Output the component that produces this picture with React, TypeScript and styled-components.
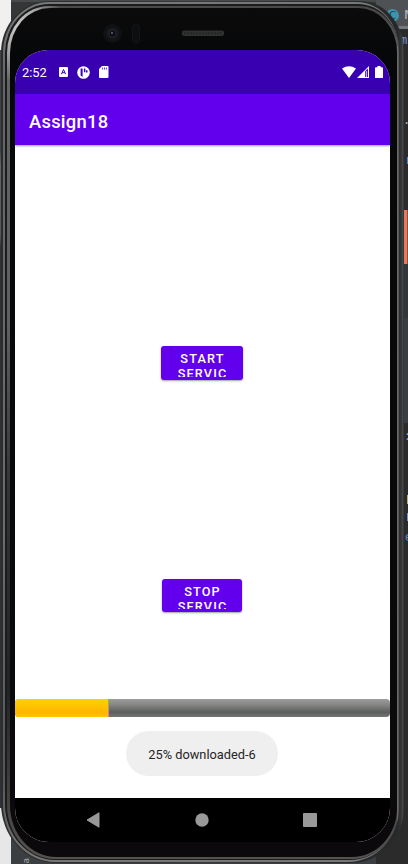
import React from "react";
import styled, { createGlobalStyle } from "styled-components";

const GlobalStyle = createGlobalStyle`
  * { box-sizing: border-box; }
  body { margin: 0; background: #2b2b2b; font-family: Roboto, sans-serif; overflow: hidden; }
`;

const Desktop = styled.div`
  position: relative;
  width: 408px;
  height: 864px;
  padding: 1px 4px 1px 1px;
  overflow: hidden;
  background: #2b2b2b;
`;

const Backdrop = styled.div`
  position: absolute;
  inset: 0;
  display: grid;
  grid-template-columns: 11px 1fr 32px;
`;

const LeftEdge = styled.div`
  background: linear-gradient(180deg, #f1f0ee 50px, #414345 50px, #414345 150px, #626466 166px, #55585a 235px, #303133 248px, #303133 808px, #e7e7e7 808px);
`;

const EditorMiddle = styled.div`
  display: flex;
  flex-direction: column;
  justify-content: flex-end;
  padding: 0 0 0 11px;
  background: linear-gradient(180deg, #484b4c 2px, #343638 2px, #343638 60px, #3b3f41 60px);
`;

const VerticalLabel = styled.span`
  writing-mode: vertical-rl;
  transform: rotate(180deg);
  align-self: flex-start;
  color: #a5a8a9;
  font: 9px/9px "DejaVu Sans", sans-serif;
`;

const RightEdge = styled.div`
  display: flex;
  flex-direction: column;
  align-items: flex-end;
  background: #2b2b2b;
`;

const EditorTab = styled.div`
  width: 32px;
  height: 29px;
  flex: none;
  display: flex;
  align-items: center;
  gap: 5px;
  padding: 4px 0 0 10px;
  border-bottom: 3px solid #747a80;
  background: #4e5254;
  color: #b9bbbd;
  font: 13px/14px "DejaVu Sans", sans-serif;
`;

const ClassBadge = styled.span`
  width: 13px;
  height: 13px;
  flex: none;
  border-radius: 50%;
  background: #3d94ae;
  color: #23414b;
  font: 10px/13px "DejaVu Sans", sans-serif;
  text-align: center;
`;

const CodeLine = styled.div<{ $h: number; $w: number; $c: string }>`
  width: ${(p) => p.$w}px;
  height: ${(p) => p.$h}px;
  flex: none;
  overflow: hidden;
  color: ${(p) => p.$c};
  font: 12px/14px "DejaVu Sans Mono", monospace;
  white-space: nowrap;
`;

const Mark = styled.div<{ $h: number; $w: number; $c?: string }>`
  width: ${(p) => p.$w}px;
  height: ${(p) => p.$h}px;
  flex: none;
  background: ${(p) => p.$c ?? "transparent"};
`;

const Shell = styled.div`
  position: relative;
  height: 862px;
  padding: 1px 5px 1px 2px;
  border-radius: 47px 44px 52px 54px / 52px 50px 56px 60px;
  background: linear-gradient(90deg, #2c2d2f 0, #38393b 50%, #26282a 396px, #323436 400px, #4a4c4e 402px, #242527 403px);
`;

const OuterRing = styled.div`
  height: 860px;
  padding: 2px 0 2px 2px;
  border-radius: 46px 42px 51px 52px / 51px 48px 55px 58px;
  background: linear-gradient(180deg, #777877 0, #646569 10%, #6b6c71 62%, #555657 90%, #777 100%);
`;

const Groove = styled.div`
  height: 856px;
  padding: 2px 0 1px 2px;
  border-radius: 44px 41px 49px 50px / 49px 47px 53px 56px;
  background: #1b1c1e;
`;

const InnerRing = styled.div`
  height: 853px;
  padding: 2px 2px 2px 3px;
  border-radius: 42px 40px 47px 48px / 47px 45px 51px 54px;
  background:
    linear-gradient(270deg, #595754 1px, #6b6865 1px, #6b6865 2px, transparent 2px) 0 40px / 100% 780px no-repeat,
    radial-gradient(ellipse 46px 56px at 10px 20px, #c6c6c4 0, #aaaaa8 45%, transparent 100%),
    linear-gradient(180deg, #4b4947 0, #4b4947 1%, #626463 8%, #5d605e 38%, #333635 56%, #222424 80%, #55534f 100%);
`;

const Bezel = styled.div`
  height: 849px;
  padding: 42px 6px 13px 5px;
  border-radius: 40px 39px 45px 46px / 45px 44px 49px 52px;
  background: linear-gradient(180deg, #0b0b0c 0, #060708 6%, #08090b 45%, #0b090b 100%);
`;

const CameraArea = styled.div`
  position: absolute;
  top: 19px;
  left: 98px;
  svg { display: block; }
`;

const Screen = styled.div`
  width: 375px;
  height: 792px;
  display: flex;
  flex-direction: column;
  overflow: hidden;
  border-radius: 33px 33px 34px 34px;
  background: #fff;
`;

const StatusBar = styled.div`
  height: 44px;
  flex: none;
  display: flex;
  align-items: center;
  padding: 0 7px;
  background: #3900b1;
  color: #fff;
`;

const Clock = styled.span`
  width: 36px;
  padding-top: 1px;
  font-size: 12.9px;
  line-height: 16px;
`;

const StatusIcon = styled.svg<{ $gap?: number }>`
  display: block;
  flex: none;
  margin-left: ${(p) => p.$gap ?? 0}px;
`;

const Spacer = styled.span`
  flex: 1;
`;

const AppBar = styled.header`
  position: relative;
  height: 51px;
  flex: none;
  display: flex;
  align-items: center;
  padding: 3px 14px 0;
  background: #6200ee;
  color: #fff;
  font-size: 18.4px;
  font-weight: 500;
  letter-spacing: 0.25px;
  box-shadow: 0 1px 2px rgba(0, 0, 0, 0.4);
`;

const Content = styled.main`
  height: 653px;
  flex: none;
  display: flex;
  flex-direction: column;
  justify-content: flex-end;
  align-items: center;
  padding-bottom: 22px;
`;

const Actions = styled.div`
  display: flex;
  flex-direction: column;
  align-items: center;
  gap: 199px;
  padding: 0 1px 87px 0;
`;

const ActionButton = styled.button<{ $w: number; $h: number }>`
  display: flex;
  flex-direction: column;
  align-items: center;
  justify-content: flex-start;
  flex: none;
  width: ${(p) => p.$w}px;
  height: ${(p) => p.$h}px;
  padding: 5px 0 3px 1px;
  border: 0;
  border-radius: 3px;
  background: #6200ee;
  box-shadow: 0 1px 2px rgba(0, 0, 0, 0.38);
  color: #fff;
`;

const ButtonLabel = styled.span`
  display: block;
  height: 100%;
  overflow: hidden;
  font: 500 12.7px/15px Roboto, sans-serif;
  letter-spacing: 1.15px;
  text-align: center;
`;

const ProgressTrack = styled.div`
  align-self: stretch;
  height: 18px;
  flex: none;
  overflow: hidden;
  border-radius: 4px;
  background: linear-gradient(180deg, #9b9c9b 0, #858685 32%, #5b5e5a 74%, #737673 100%);
`;

const ProgressFill = styled.div`
  height: 100%;
  border-right: 1px solid #b79d59;
  background: linear-gradient(180deg, #ffd000 0, #ffc500 35%, #ffb500 74%, #ffc500 100%);
`;

const Toast = styled.div`
  width: 152px;
  height: 45px;
  margin: 14px 1px 0 0;
  display: flex;
  align-items: center;
  justify-content: center;
  padding-top: 1px;
  border-radius: 23px;
  background: #efefef;
  color: #252525;
  font-size: 12.8px;
`;

const NavBar = styled.nav`
  height: 44px;
  flex: none;
  display: grid;
  grid-template-columns: 14px 14px 14px;
  column-gap: 94.5px;
  align-items: center;
  padding-left: 71px;
  background: #000;
  svg { display: block; }
`;

const EditorBackdrop = () => (
  <Backdrop>
    <LeftEdge />
    <EditorMiddle>
      <VerticalLabel>a</VerticalLabel>
    </EditorMiddle>
    <RightEdge>
      <EditorTab>
        <ClassBadge>C</ClassBadge>M
      </EditorTab>
      <Mark $w={0} $h={4} />
      <CodeLine $w={8} $h={80} $c="#719dd1">mp</CodeLine>
      <CodeLine $w={5} $h={40} $c="#a9b7c6">.r</CodeLine>
      <CodeLine $w={3} $h={57} $c="#759bc9">r</CodeLine>
      <Mark $w={4} $h={54} $c="linear-gradient(90deg,#ed745e 3px,#775b38 3px)" />
      <Mark $w={4} $h={54} $c="#333638" />
      <Mark $w={4} $h={105} $c="#3b3e40" />
      <Mark $w={0} $h={6} />
      <CodeLine $w={4} $h={66} $c="#8daccb">:</CodeLine>
      <Mark $w={1} $h={9} $c="#b8b773" />
      <Mark $w={0} $h={9} />
      <Mark $w={1} $h={8} $c="#758fd0" />
      <Mark $w={0} $h={9} />
      <CodeLine $w={3} $h={16} $c="#4f8cc3">e</CodeLine>
    </RightEdge>
  </Backdrop>
);

const CameraParts = () => (
  <CameraArea>
    <svg width="130" height="26" viewBox="0 0 130 26">
      <circle cx="13.5" cy="13.5" r="9.5" fill="#101113" />
      <circle cx="13.5" cy="13.5" r="6" fill="#191a1c" />
      <circle cx="13.5" cy="13.5" r="3.5" fill="#080b12" stroke="#24262b" />
      <circle cx="13" cy="13" r="1.2" fill="#4b5368" />
      <rect x="33.5" y="4" width="7" height="19" rx="3.5" fill="#0d0e0f" stroke="#141516" />
      <rect x="83" y="10.5" width="42" height="5.5" rx="2" fill="#303131" />
      <path d="M85 13.2h38" stroke="#262727" strokeWidth="2" strokeDasharray="2 1" />
    </svg>
  </CameraArea>
);

const LeftStatusIcons = () => (
  <>
    <StatusIcon $gap={1} width="9" height="10" viewBox="0 0 9 10">
      <rect width="9" height="10" rx="1" fill="#fff" />
      <path d="M2.4 7.2 4.5 2.5 6.6 7.2M3.1 5.7h2.8" stroke="#3900b1" strokeWidth="1" fill="none" />
    </StatusIcon>
    <StatusIcon $gap={9} width="13" height="13" viewBox="0 0 13 13">
      <circle cx="6.5" cy="6.5" r="6.3" fill="#fff" />
      <path d="M3.6 2.6h2v8.2A4.6 4.6 0 0 1 3.6 9.6z" fill="#3900b1" />
      <path d="M6.9 2.4h1.5v3.8H6.9zM9 4.2h1.5v2.2H9z" fill="#3900b1" />
    </StatusIcon>
    <StatusIcon $gap={9} width="10" height="12" viewBox="0 0 10 12">
      <path d="M3 0h5.5a1 1 0 0 1 1 1v10a1 1 0 0 1-1 1H1a1 1 0 0 1-1-1V3z" fill="#fff" />
      <path d="M3.6 1.5v2M5.5 1.5v2M7.4 1.5v2" stroke="#3900b1" strokeWidth=".8" />
    </StatusIcon>
  </>
);

const RightStatusIcons = () => (
  <>
    <StatusIcon width="14" height="12" viewBox="0 0 14 12">
      <path d="M0 2.5Q7-2 14 2.5L7 12z" fill="#fff" />
    </StatusIcon>
    <StatusIcon $gap={1} width="12" height="12" viewBox="0 0 12 12">
      <path d="M0 12 12 0v12zM8.2 5.3V11h2.7V2.5z" fill="#fff" fillRule="evenodd" />
      <path d="M9.5 5v6" stroke="#fff" strokeWidth=".7" />
    </StatusIcon>
    <StatusIcon $gap={6} width="8" height="12" viewBox="0 0 8 12">
      <path d="M2.4 0h3.2v1.3H7q1 0 1 1V12H0V2.3q0-1 1-1h1.4z" fill="#fff" />
    </StatusIcon>
  </>
);

export default function App() {
  const progress = 25;
  return (
    <Desktop>
      <GlobalStyle />
      <EditorBackdrop />
      <Shell>
        <OuterRing>
          <Groove>
            <InnerRing>
              <Bezel>
                <CameraParts />
                <Screen>
                  <StatusBar>
                    <Clock>2:52</Clock>
                    <LeftStatusIcons />
                    <Spacer />
                    <RightStatusIcons />
                  </StatusBar>
                  <AppBar>Assign18</AppBar>
                  <Content>
                    <Actions>
                      <ActionButton $w={82} $h={34}>
                        <ButtonLabel>START<br />SERVIC</ButtonLabel>
                      </ActionButton>
                      <ActionButton $w={80} $h={33}>
                        <ButtonLabel>STOP<br />SERVIC</ButtonLabel>
                      </ActionButton>
                    </Actions>
                    <ProgressTrack>
                      <ProgressFill style={{ width: `${progress}%` }} />
                    </ProgressTrack>
                    <Toast>25% downloaded-6</Toast>
                  </Content>
                  <NavBar>
                    <svg width="14" height="16" viewBox="0 0 14 16"><path d="M1 8 13 .8v14.4z" fill="#999" stroke="#999" strokeLinejoin="round" /></svg>
                    <svg width="14" height="14" viewBox="0 0 14 14"><circle cx="7" cy="7" r="6.7" fill="#999" /></svg>
                    <svg width="14" height="14" viewBox="0 0 14 14"><rect width="14" height="14" rx=".8" fill="#999" /></svg>
                  </NavBar>
                </Screen>
              </Bezel>
            </InnerRing>
          </Groove>
        </OuterRing>
      </Shell>
    </Desktop>
  );
}
